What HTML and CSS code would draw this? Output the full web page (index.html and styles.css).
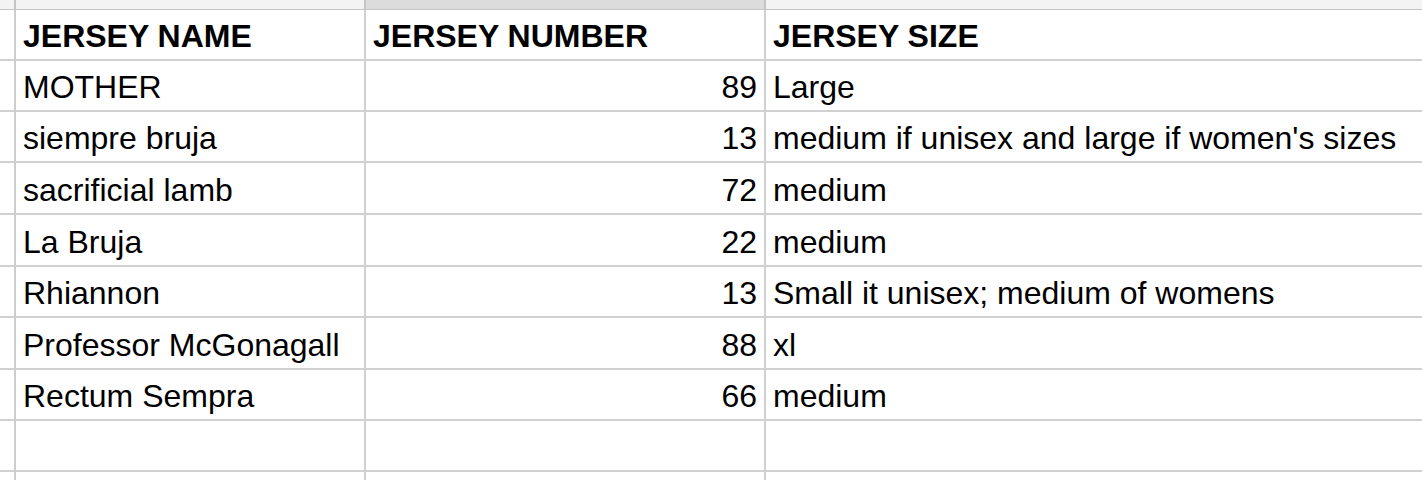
FILE: index.html
```html
<!DOCTYPE html>
<html>
<head>
<meta charset="utf-8">
<link rel="stylesheet" href="styles.css">
</head>
<body>
<div class="sheet">
  <div class="ch"></div><div class="ch"></div><div class="ch ch-sel"></div><div class="ch ch-last"></div>

  <div class="rh"></div><div class="c b">JERSEY NAME</div><div class="c b">JERSEY NUMBER</div><div class="c b last">JERSEY SIZE</div>
  <div class="rh"></div><div class="c">MOTHER</div><div class="c num">89</div><div class="c last">Large</div>
  <div class="rh"></div><div class="c">siempre bruja</div><div class="c num">13</div><div class="c last">medium if unisex and large if women's sizes</div>
  <div class="rh"></div><div class="c">sacrificial lamb</div><div class="c num">72</div><div class="c last">medium</div>
  <div class="rh"></div><div class="c">La Bruja</div><div class="c num">22</div><div class="c last">medium</div>
  <div class="rh"></div><div class="c">Rhiannon</div><div class="c num">13</div><div class="c last">Small it unisex; medium of womens</div>
  <div class="rh"></div><div class="c">Professor McGonagall</div><div class="c num">88</div><div class="c last">xl</div>
  <div class="rh"></div><div class="c">Rectum Sempra</div><div class="c num">66</div><div class="c last">medium</div>
  <div class="rh"></div><div class="c"></div><div class="c num"></div><div class="c last"></div>
  <div class="rh cut"></div><div class="c cut"></div><div class="c num cut"></div><div class="c last cut"></div>
</div>
</body>
</html>
```
FILE: styles.css
```css
html, body {
  margin: 0;
  padding: 0;
  background: #ffffff;
}
body {
  width: 1422px;
  height: 480px;
  overflow: hidden;
  font-family: "Liberation Sans", Arial, sans-serif;
  color: #000;
}
.sheet {
  display: grid;
  grid-template-columns: 16px 350px 400px 1fr;
  grid-template-rows: 10px 51px 51px 51px 52px 52px 51px 52px 51px 51px 8px;
  height: 480px;
  overflow: hidden;
}
.ch {
  background: #f3f3f3;
  border-right: 2px solid #c4c4c4;
  border-bottom: 1px solid #c4c4c4;
  box-sizing: border-box;
}
.ch-sel {
  background: #dcdcdc;
}
.ch-last {
  border-right: none;
}
.rh {
  border-right: 2px solid #cdcdcd;
  border-bottom: 2px solid #d0d0d0;
  box-sizing: border-box;
  background: #ffffff;
}
.c {
  box-sizing: border-box;
  border-right: 2px solid #d0d0d0;
  border-bottom: 2px solid #d0d0d0;
  display: flex;
  align-items: flex-end;
  padding: 0 7px 7px 7px;
  font-size: 32px;
  line-height: 32px;
  white-space: nowrap;
  overflow: hidden;
}
.c.last {
  border-right: none;
  padding-left: 7px;
}
.cut {
  border-bottom: none;
}
.num {
  justify-content: flex-end;
}
.b {
  font-weight: bold;
}
```
